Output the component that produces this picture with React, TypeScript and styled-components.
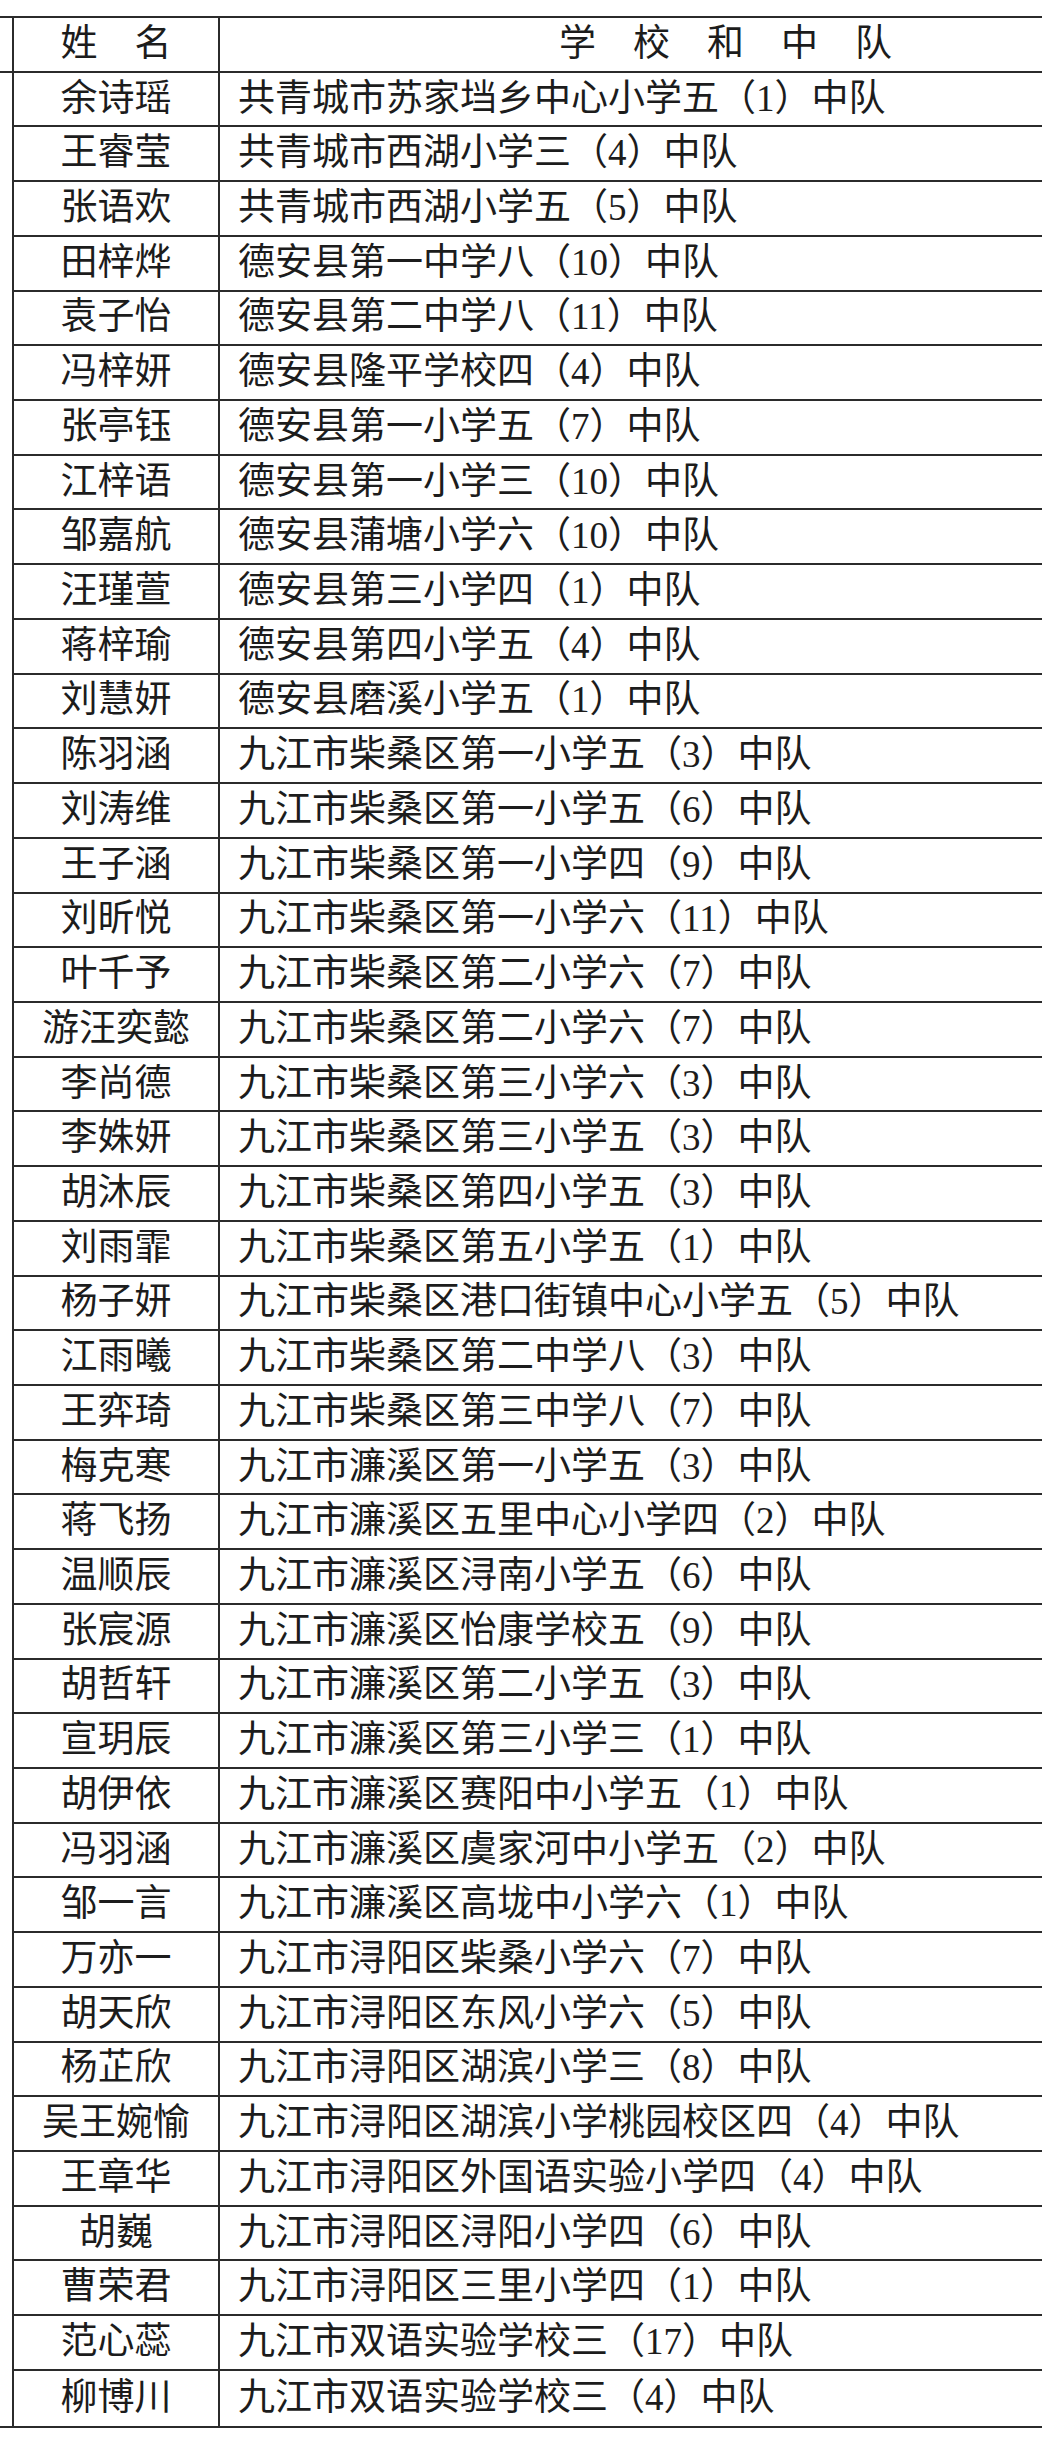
import styled, { createGlobalStyle } from 'styled-components'

const GlobalStyle = createGlobalStyle`
  html, body {
    margin: 0;
    padding: 0;
    background: #ffffff;
  }
  body {
    font-family: 'Liberation Serif', 'Noto Sans CJK SC', serif;
    color: #1c1c1c;
  }
`

const ROW_HEIGHT = 54.72
const LINE = '2px solid #2b2b2b'

const rows: [string, string][] = [
  ['余诗瑶', '共青城市苏家垱乡中心小学五（1）中队'],
  ['王睿莹', '共青城市西湖小学三（4）中队'],
  ['张语欢', '共青城市西湖小学五（5）中队'],
  ['田梓烨', '德安县第一中学八（10）中队'],
  ['袁子怡', '德安县第二中学八（11）中队'],
  ['冯梓妍', '德安县隆平学校四（4）中队'],
  ['张亭钰', '德安县第一小学五（7）中队'],
  ['江梓语', '德安县第一小学三（10）中队'],
  ['邹嘉航', '德安县蒲塘小学六（10）中队'],
  ['汪瑾萱', '德安县第三小学四（1）中队'],
  ['蒋梓瑜', '德安县第四小学五（4）中队'],
  ['刘慧妍', '德安县磨溪小学五（1）中队'],
  ['陈羽涵', '九江市柴桑区第一小学五（3）中队'],
  ['刘涛维', '九江市柴桑区第一小学五（6）中队'],
  ['王子涵', '九江市柴桑区第一小学四（9）中队'],
  ['刘昕悦', '九江市柴桑区第一小学六（11）中队'],
  ['叶千予', '九江市柴桑区第二小学六（7）中队'],
  ['游汪奕懿', '九江市柴桑区第二小学六（7）中队'],
  ['李尚德', '九江市柴桑区第三小学六（3）中队'],
  ['李姝妍', '九江市柴桑区第三小学五（3）中队'],
  ['胡沐辰', '九江市柴桑区第四小学五（3）中队'],
  ['刘雨霏', '九江市柴桑区第五小学五（1）中队'],
  ['杨子妍', '九江市柴桑区港口街镇中心小学五（5）中队'],
  ['江雨曦', '九江市柴桑区第二中学八（3）中队'],
  ['王弈琦', '九江市柴桑区第三中学八（7）中队'],
  ['梅克寒', '九江市濂溪区第一小学五（3）中队'],
  ['蒋飞扬', '九江市濂溪区五里中心小学四（2）中队'],
  ['温顺辰', '九江市濂溪区浔南小学五（6）中队'],
  ['张宸源', '九江市濂溪区怡康学校五（9）中队'],
  ['胡哲轩', '九江市濂溪区第二小学五（3）中队'],
  ['宣玥辰', '九江市濂溪区第三小学三（1）中队'],
  ['胡伊依', '九江市濂溪区赛阳中小学五（1）中队'],
  ['冯羽涵', '九江市濂溪区虞家河中小学五（2）中队'],
  ['邹一言', '九江市濂溪区高垅中小学六（1）中队'],
  ['万亦一', '九江市浔阳区柴桑小学六（7）中队'],
  ['胡天欣', '九江市浔阳区东风小学六（5）中队'],
  ['杨芷欣', '九江市浔阳区湖滨小学三（8）中队'],
  ['吴王婉愉', '九江市浔阳区湖滨小学桃园校区四（4）中队'],
  ['王章华', '九江市浔阳区外国语实验小学四（4）中队'],
  ['胡巍', '九江市浔阳区浔阳小学四（6）中队'],
  ['曹荣君', '九江市浔阳区三里小学四（1）中队'],
  ['范心蕊', '九江市双语实验学校三（17）中队'],
  ['柳博川', '九江市双语实验学校三（4）中队'],
]

const Page = styled.div`
  width: 1042px;
  padding-top: 16px;
  overflow: hidden;
`

const Table = styled.div`
  display: grid;
  grid-template-columns: 14px 206px 1fr;
  grid-auto-rows: ${ROW_HEIGHT}px;
  border-top: ${LINE};
  border-bottom: ${LINE};
`

const Stub = styled.div<{ $span?: number }>`
  box-sizing: border-box;
  border-right: ${LINE};
  ${(p) => (p.$span ? `grid-row: span ${p.$span};` : `border-bottom: ${LINE};`)}
`

const Cell = styled.div<{ $last?: boolean }>`
  box-sizing: border-box;
  display: flex;
  align-items: center;
  font-size: 37px;
  line-height: 1;
  white-space: nowrap;
  padding-bottom: 2px;
  border-bottom: ${(p) => (p.$last ? 'none' : LINE)};
`

const NameCell = styled(Cell)`
  justify-content: center;
  border-right: ${LINE};
`

const SchoolCell = styled(Cell)`
  padding-left: 18px;
`

const HeaderSchool = styled(Cell)`
  padding-left: 339px;
`

export default function App() {
  return (
    <Page>
      <GlobalStyle />
      <Table>
        <Stub />
        <NameCell>姓　名</NameCell>
        <HeaderSchool>学　校　和　中　队</HeaderSchool>
        <Stub $span={rows.length} />
        {rows.map(([name, school], i) => {
          const last = i === rows.length - 1
          return [
            <NameCell key={`n${i}`} $last={last}>{name}</NameCell>,
            <SchoolCell key={`s${i}`} $last={last}>{school}</SchoolCell>,
          ]
        })}
      </Table>
    </Page>
  )
}
